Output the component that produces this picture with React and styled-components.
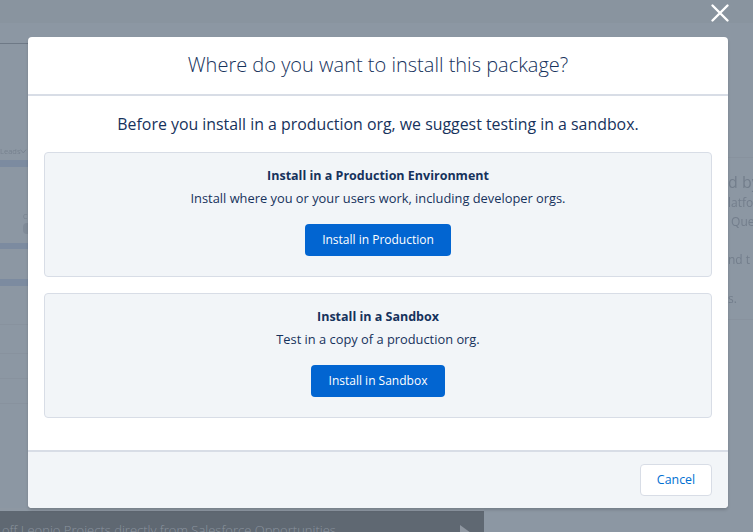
import React from 'react';
import styled, { createGlobalStyle } from 'styled-components';

const GlobalStyle = createGlobalStyle`
  html, body {
    margin: 0;
    padding: 0;
    height: 100%;
    overflow: hidden;
    background: #8c97a3;
  }
  body {
    font-family: "Open Sans", "Noto Sans", "Liberation Sans", sans-serif;
  }
`;

const Page = styled.div`
  position: relative;
  width: 753px;
  height: 532px;
  overflow: hidden;
  display: flex;
  flex-direction: column;
`;

const TopStrip = styled.div`
  height: 23px;
  flex: none;
  background: #89949f;
`;

const Behind = styled.div`
  flex: 1;
  display: flex;
  justify-content: space-between;
  min-height: 0;
`;

const LeftRail = styled.div`
  width: 28px;
  display: flex;
  flex-direction: column;
  filter: blur(0.5px);
  overflow: hidden;
`;

const RailLine = styled.div`
  height: 1px;
  margin-top: ${p => p.$top}px;
  background: ${p => p.$color || '#88929e'};
  flex: none;
`;

const RailBand = styled.div`
  height: ${p => p.$h || 7}px;
  margin-top: ${p => p.$top}px;
  background: #7c8ba0;
  flex: none;
`;

const LeadsRow = styled.div`
  margin-top: ${p => p.$top}px;
  height: 14px;
  display: flex;
  justify-content: space-between;
  align-items: center;
  padding-right: 1px;
  font-size: 7.5px;
  line-height: 14px;
  color: #77828f;
  white-space: nowrap;
  flex: none;
`;

const OwnerMark = styled.div`
  margin-top: ${p => p.$top}px;
  height: 22px;
  padding-left: 23px;
  font-size: 7px;
  line-height: 9px;
  color: #77828f;
  flex: none;
`;

const OwnerBlob = styled.div`
  width: 8px;
  height: 11px;
  margin-top: 2px;
  border-radius: 4px;
  background: #808b98;
`;

const RightRail = styled.div`
  width: 25px;
  display: flex;
  flex-direction: column;
  filter: blur(0.4px);
  overflow: hidden;
`;

const RightText = styled.div`
  margin-top: ${p => p.$top}px;
  height: ${p => p.$size + 4}px;
  font-size: ${p => p.$size}px;
  line-height: ${p => p.$size + 4}px;
  color: #737e8c;
  white-space: nowrap;
  flex: none;
`;

const BarLip = styled.div`
  flex: none;
  width: 484px;
  height: 3px;
  background: #8e98a3;
`;

const BottomBar = styled.div`
  flex: none;
  width: 484px;
  height: 21px;
  padding-left: 2px;
  box-sizing: border-box;
  background: #5f6872;
  color: #8a939e;
  font-size: 13px;
  font-weight: 300;
  line-height: 39px;
  white-space: nowrap;
  overflow: hidden;
  position: relative;
`;

const BarArrow = styled.div`
  position: absolute;
  left: 460px;
  top: 14px;
  width: 0;
  height: 0;
  border-top: 8px solid transparent;
  border-bottom: 8px solid transparent;
  border-left: 11px solid #8f97a1;
`;

const CloseButton = styled.button`
  position: absolute;
  top: 3px;
  right: 23px;
  width: 20px;
  height: 20px;
  padding: 0;
  border: none;
  background: none;
  color: #fff;
  display: flex;
`;

const Modal = styled.div`
  position: absolute;
  left: 28px;
  top: 37px;
  width: 700px;
  height: 471px;
  background: #fff;
  border-radius: 4px;
  box-shadow: 0 2px 3px rgba(0, 0, 0, 0.16);
  display: flex;
  flex-direction: column;
  overflow: hidden;
  color: #16325c;
`;

const Header = styled.header`
  height: 57px;
  flex: none;
  border-bottom: 2px solid #d8dde6;
  text-align: center;
  font-size: 20px;
  font-weight: 300;
  line-height: 56px;
`;

const Body = styled.div`
  flex: 1;
  padding: 0 16px;
  display: flex;
  flex-direction: column;
`;

const Lead = styled.p`
  margin: 0;
  height: 56px;
  flex: none;
  text-align: center;
  font-size: 15.88px;
  line-height: 56px;
`;

const Card = styled.section`
  height: 125px;
  box-sizing: border-box;
  flex: none;
  margin-bottom: 16px;
  padding-top: 13px;
  background: #f2f5f8;
  border: 1px solid #d8dde6;
  border-radius: 4px;
  display: flex;
  flex-direction: column;
  align-items: center;
`;

const CardTitle = styled.h3`
  margin: 0;
  font-size: 12.5px;
  line-height: 20px;
  font-weight: 700;
`;

const CardText = styled.p`
  margin: 2px 0 16px;
  font-size: 12.85px;
  line-height: 20px;
`;

const BrandButton = styled.button`
  height: 32px;
  width: ${p => p.$width}px;
  padding: 0 0 1px;
  border: none;
  border-radius: 4px;
  background: #0265d1;
  color: #fff;
  font: 500 12px/30px "Open Sans", "Noto Sans", sans-serif;
`;

const Footer = styled.footer`
  height: 56px;
  flex: none;
  border-top: 2px solid #d8dde6;
  background: #f2f5f8;
  display: flex;
  justify-content: flex-end;
  align-items: center;
  padding: 0 16px;
`;

const CancelButton = styled.button`
  width: 72px;
  height: 32px;
  padding: 0;
  box-sizing: border-box;
  border: 1px solid #d8dde6;
  border-radius: 4px;
  background: #fff;
  color: #0070d2;
  font: 400 12.4px/30px "Open Sans", "Noto Sans", sans-serif;
`;

export default function App() {
  return (
    <Page>
      <GlobalStyle />
      <TopStrip />
      <Behind>
        <LeftRail>
          <RailLine $top={20} $color="#6e7986" />
          <LeadsRow $top={100}>
            Leads
            <svg width="7" height="5" viewBox="0 0 7 5" fill="none">
              <path d="M0.5 0.5 L3.5 4 L6.5 0.5" stroke="#77828f" strokeWidth="1" />
            </svg>
          </LeadsRow>
          <RailBand $top={2} />
          <OwnerMark $top={45}>
            C
            <OwnerBlob />
          </OwnerMark>
          <RailBand $top={9} $h={6} />
          <RailBand $top={30} />
          <RailLine $top={38} />
          <RailLine $top={28} />
          <RailLine $top={24} />
          <RailLine $top={24} />
        </LeftRail>
        <RightRail>
          <RailLine $top={134} />
          <RightText $size={16} $top={14}>d by</RightText>
          <RightText $size={12} $top={3}>latfo</RightText>
          <RightText $size={12} $top={3}>&nbsp;Que</RightText>
          <RightText $size={12} $top={22}>nd t</RightText>
          <RightText $size={12} $top={23}>s.</RightText>
          <RailLine $top={12} />
        </RightRail>
      </Behind>
      <BarLip />
      <BottomBar>
        off Leonio Projects directly from Salesforce Opportunities
        <BarArrow />
      </BottomBar>

      <CloseButton aria-label="Close">
        <svg width="20" height="20" viewBox="0 0 20 20" fill="none">
          <path d="M2.5 2.5 L17.5 17.5 M17.5 2.5 L2.5 17.5" stroke="currentColor" strokeWidth="2.4" strokeLinecap="round" />
        </svg>
      </CloseButton>

      <Modal>
        <Header>Where do you want to install this package?</Header>
        <Body>
          <Lead>Before you install in a production org, we suggest testing in a sandbox.</Lead>
          <Card>
            <CardTitle>Install in a Production Environment</CardTitle>
            <CardText>Install where you or your users work, including developer orgs.</CardText>
            <BrandButton $width={146}>Install in Production</BrandButton>
          </Card>
          <Card>
            <CardTitle>Install in a Sandbox</CardTitle>
            <CardText>Test in a copy of a production org.</CardText>
            <BrandButton $width={134}>Install in Sandbox</BrandButton>
          </Card>
        </Body>
        <Footer>
          <CancelButton>Cancel</CancelButton>
        </Footer>
      </Modal>
    </Page>
  );
}
